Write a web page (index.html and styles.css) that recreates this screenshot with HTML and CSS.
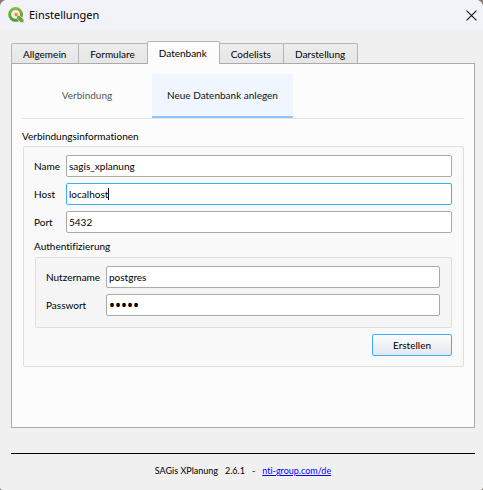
FILE: index.html
```html
<!DOCTYPE html>
<html lang="de">
<head>
<meta charset="utf-8">
<meta name="viewport" content="width=device-width, initial-scale=1">
<title>Einstellungen</title>
<link rel="stylesheet" href="styles.css">
</head>
<body>
<div class="window">
  <header class="titlebar">
    <svg class="logo" viewBox="0 0 16 16" aria-hidden="true">
      <defs>
        <linearGradient id="ring" x1="0" y1="0" x2="0" y2="1">
          <stop offset="0" stop-color="#8cb83c"/>
          <stop offset="1" stop-color="#4f9d30"/>
        </linearGradient>
      </defs>
      <circle cx="7.6" cy="7.4" r="5.9" fill="none" stroke="url(#ring)" stroke-width="3"/>
      <path d="M8.6 8.6h3.2l4 4v3h-3l-4.2-4.2z" fill="#68a733" stroke="#f1f3f9" stroke-width=".6"/>
      <path d="M6 5.4h3.6l1.2 1.5-1 2.7H7.2L5.4 7.8z" fill="#f7c9a0"/>
      <path d="M7 6.4h2.2v2.4H7z" fill="#ee7913"/>
    </svg>
    <h1 class="title">Einstellungen</h1>
    <button class="close" type="button" aria-label="Schließen">
      <svg viewBox="0 0 10 10" aria-hidden="true"><path d="M.5.5l9 9M9.5.5l-9 9" fill="none" stroke="#111" stroke-width="1"/></svg>
    </button>
  </header>
  <main class="content">
    <div class="tabs" role="tablist">
      <button class="tab" type="button" role="tab">Allgemein</button>
      <button class="tab" type="button" role="tab">Formulare</button>
      <button class="tab active" type="button" role="tab" aria-selected="true">Datenbank</button>
      <button class="tab" type="button" role="tab">Codelists</button>
      <button class="tab" type="button" role="tab">Darstellung</button>
    </div>
    <section class="panel">
      <div class="subtabs" role="tablist">
        <button class="subtab" type="button" role="tab">Verbindung</button>
        <button class="subtab current" type="button" role="tab" aria-selected="true">Neue Datenbank anlegen</button>
      </div>
      <form class="form">
        <h2 class="heading">Verbindungsinformationen</h2>
        <div class="group">
          <div class="fields">
            <label for="name">Name</label>
            <input class="field" id="name" type="text" value="sagis_xplanung">
            <label for="host">Host</label>
            <div class="editing">
              <input class="field focused" id="host" type="text" value="localhost">
              <span class="caret"></span>
            </div>
            <label for="port">Port</label>
            <input class="field" id="port" type="text" value="5432">
          </div>
          <h3 class="heading inner">Authentifizierung</h3>
          <div class="group nested">
            <div class="fields wide">
              <label for="user">Nutzername</label>
              <input class="field" id="user" type="text" value="postgres">
              <label for="password">Passwort</label>
              <input class="field secret" id="password" type="password" value="admin">
            </div>
          </div>
          <div class="actions"><button class="create" type="button">Erstellen</button></div>
        </div>
      </form>
    </section>
  </main>
  <footer class="footer">
    <span>SAGis XPlanung</span><span>2.6.1</span><span>-</span><a href="https://nti-group.com/de">nti-group.com/de</a>
  </footer>
</div>
</body>
</html>
```
FILE: styles.css
```css
* { box-sizing: border-box; }

body {
  margin: 0;
  background: #8b7b78;
  color: #000;
  font: 10px/14px Lato, "Open Sans", sans-serif;
  font-variant-ligatures: none;
}

button, input {
  font: inherit;
  font-variant-ligatures: none;
  color: inherit;
}

.window {
  display: flex;
  flex-direction: column;
  min-height: 100vh;
  overflow: hidden;
  border-radius: 7px 7px 3px 3px;
  background: #f0f0f0;
}

.titlebar {
  display: flex;
  align-items: center;
  height: 30px;
  padding: 0 6px 0 8px;
  background: #f1f3f9;
}

.logo { width: 16px; height: 16px; }

.title {
  flex: 1;
  margin: 0 0 0 5px;
  font-family: "Noto Sans", "Open Sans", sans-serif;
  font-size: 11px;
  font-weight: 400;
  line-height: 16px;
}

.close {
  display: flex;
  padding: 0;
  border: 0;
  background: none;
}

.close svg { width: 11px; height: 11px; }

.content {
  display: flex;
  flex: 1;
  flex-direction: column;
  padding: 11px 8px 0 11px;
}

.tabs {
  display: flex;
  align-items: flex-end;
  height: 22px;
}

.tab {
  flex: none;
  height: 20px;
  margin-right: -1px;
  padding: 0 12px 0 11px;
  border: 1px solid #b5b5b5;
  border-bottom: 0;
  border-radius: 2px 2px 0 0;
  background: linear-gradient(#ededed, #e6e6e6);
}

.tab.active {
  z-index: 1;
  height: 23px;
  margin-bottom: -1px;
  background: #fcfcfc;
}

.panel {
  flex: 1;
  padding: 10px;
  border: 1px solid #aaa;
  background: #fcfcfc;
}

.subtabs {
  display: flex;
  border-bottom: 1px solid #e5e5e5;
}

.subtab {
  height: 44px;
  padding: 0 15px;
  border: 0;
  border-bottom: 2px solid transparent;
  background: none;
  color: #555;
}

.subtab:first-child { width: 130px; }

.subtab.current {
  border-bottom-color: #93c5fd;
  background: #eff6ff;
  color: #111;
}

.heading {
  margin: 10px 0 3px;
  font-size: 10px;
  font-weight: 400;
}

.heading.inner { margin: 6px 0 4px; }

.group {
  margin-left: 1px;
  padding: 8px 11px 10px 10px;
  border: 1px solid #dedede;
  border-radius: 2px;
  background: #f9f9f9;
}

.group.nested {
  padding-bottom: 11px;
  background: #f5f5f5;
}

.fields {
  display: grid;
  grid-template-columns: 26px 1fr;
  gap: 6px;
  align-items: center;
}

.fields.wide { grid-template-columns: 54px 1fr; }

.field {
  display: block;
  width: 100%;
  height: 22px;
  padding: 0 2px;
  border: 1px solid #aaa;
  border-radius: 2px;
  outline: 0;
  background: #fff;
}

.focused { border-color: #3daefd; }

.secret {
  font-family: "Noto Sans", sans-serif;
  font-size: 16px;
}

.editing { position: relative; }

.caret {
  position: absolute;
  top: 5px;
  left: 42px;
  width: 1px;
  height: 12px;
  background: #000;
}

.actions {
  display: flex;
  justify-content: flex-end;
  margin-top: 6px;
}

.create {
  width: 80px;
  height: 22px;
  padding: 0;
  border: 1px solid #3daefd;
  border-radius: 2px;
  background: linear-gradient(#fbfcfd, #e3e7ec);
}

.footer {
  display: flex;
  justify-content: center;
  gap: 7px;
  margin: 25px 8px 0 11px;
  padding: 10px 0 12px;
  border-top: 1px solid #000;
  font-size: 9px;
}

.footer a { color: #00f; }
```
